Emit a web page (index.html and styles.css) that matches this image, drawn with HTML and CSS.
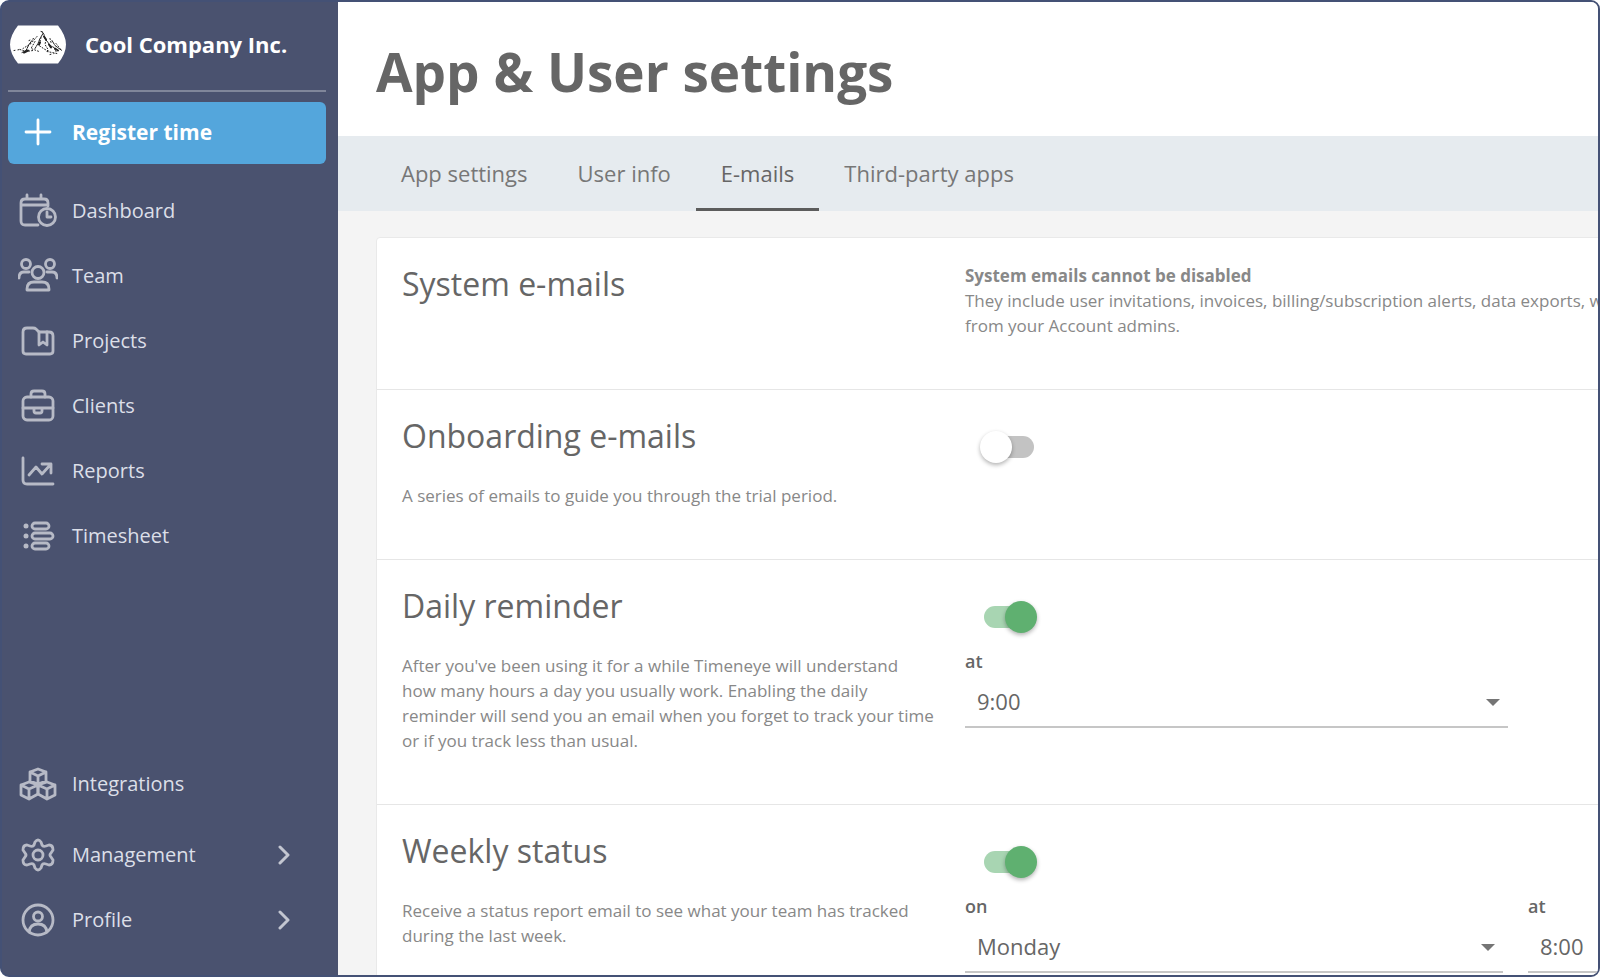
FILE: index.html
```html
<!DOCTYPE html>
<html lang="en">
  <head>
    <meta charset="utf-8" />
    <meta name="viewport" content="width=device-width, initial-scale=1" />
    <title>App &amp; User settings</title>
    <link rel="stylesheet" href="styles.css">
  </head>
  <body>
    <div class="app">
      <aside class="sidebar">
        <div class="company">
          <svg class="company-logo" viewBox="0 0 56 38" aria-hidden="true">
            <path d="M8 0H48Q56 10 56 19T48 38H8Q0 28 0 19T8 0Z" fill="#fff" />
            <g fill="none" stroke="#222" stroke-linecap="round">
              <path stroke-width="1" stroke-dasharray="4 1" d="M32 6l2 3 1 4 3 4 2 3 4 2 2 4M33 8l-3 5-2 5-3 5M42 15l3 5 4 3 3 2M22 15l-3 4-3 6-4 2" />
              <path stroke-width="2" d="M34 11l2 3M39 19l2 3M45 23l3 2M18 25l-4 2M30 17l-1 2" />
              <path stroke-width="1" stroke-dasharray="1 2" d="M27 11l-6 7-8 5M31 12l-2 8 6 4 5 2M25 16l-4 7 8 3M36 14l-1 5 3 5M40 13l1 4M46 18l4 5M10 24l6 2 7-1M37 26l10 2" />
              <path stroke-width="1" stroke-dasharray="1 3" d="M4 25l6-1M19 15l5-2M31 6l3 1M40 29l4-1" />
            </g>
          </svg>
          <span class="company-name">Cool Company Inc.</span>
        </div>

        <button type="button" class="register">
          <svg class="icon" viewBox="0 0 40 40" aria-hidden="true"><path d="M20 8v24M8 20h24" /></svg>
          Register time
        </button>

        <nav class="nav">
          <a href="#" class="nav-link">
            <svg class="icon" viewBox="0 0 40 40" aria-hidden="true">
              <path d="M20 34H7q-4 0-4-4V12q0-4 4-4h19q4 0 4 4v3M3 14h27M9 4v4M23 4v4" />
              <circle cx="29" cy="26" r="8.5" />
              <path d="M29 21v5h4" />
            </svg>
            Dashboard
          </a>
          <a href="#" class="nav-link">
            <svg class="icon" viewBox="0 0 40 40" aria-hidden="true">
              <circle cx="8" cy="8" r="4.5" />
              <circle cx="32" cy="8" r="4.5" />
              <circle cx="20" cy="16.5" r="6" />
              <path d="M1 22q0-6 5-6h5M39 22q0-6-5-6h-5M9 34v-1q0-7 7-7h8q7 0 7 7v1z" />
            </svg>
            Team
          </a>
          <a href="#" class="nav-link">
            <svg class="icon" viewBox="0 0 40 40" aria-hidden="true">
              <path d="M5 30V11q0-4 4-4h6q2 0 3 1l3 3h10q4 0 4 4v15q0 3-3 3H8q-3 0-3-3z" />
              <path d="M21 11v13l4-3 4 3V11" />
            </svg>
            Projects
          </a>
          <a href="#" class="nav-link">
            <svg class="icon" viewBox="0 0 40 40" aria-hidden="true">
              <rect x="5" y="11" width="30" height="23" rx="4" />
              <path d="M13 11V8q0-3 3-3h8q3 0 3 3v3M5 22h30M16 22v3q0 2 2 2h4q2 0 2-2v-3" />
            </svg>
            Clients
          </a>
          <a href="#" class="nav-link">
            <svg class="icon" viewBox="0 0 40 40" aria-hidden="true">
              <path d="M5 7v22q0 4 4 4h26M11 24l7-8 6 7 9-10M24 13h9v9" />
            </svg>
            Reports
          </a>
          <a href="#" class="nav-link">
            <svg class="icon" viewBox="0 0 40 40" aria-hidden="true">
              <rect x="14" y="7" width="17" height="6" rx="3" />
              <rect x="14" y="17" width="21" height="6" rx="3" />
              <rect x="14" y="27" width="17" height="6" rx="3" />
              <g class="dot"><circle cx="8" cy="10" r="2.5" /><circle cx="8" cy="20" r="2.5" /><circle cx="8" cy="30" r="2.5" /></g>
            </svg>
            Timesheet
          </a>
        </nav>

        <nav class="nav nav-bottom">
          <a href="#" class="nav-link integrations">
            <svg class="icon" viewBox="0 0 40 40" aria-hidden="true">
              <path d="M20 5l8 3v9l-8 3-8-3V8zM12 8l8 4 8-4M20 12v8" />
              <path d="M11 18l9 3v9l-9 5-8-4V21zM3 21l8 4 9-4M11 25v9" />
              <path d="M29 18l8 3v10l-8 4-9-5v-9zM20 21l9 4 8-4M29 25v9" />
            </svg>
            Integrations
          </a>
          <a href="#" class="nav-link">
            <svg class="icon" viewBox="0 0 40 40" aria-hidden="true">
              <path d="M17 7q3-4 6 0l1 3q1 2 4 1l3-1q4 0 4 5l-2 3q-2 2 0 4l2 3q0 5-4 5l-3-1q-3-1-4 1l-1 3q-3 4-6 0l-1-3q-1-2-4-1l-3 1q-4 0-4-5l2-3q2-2 0-4l-2-3q0-5 4-5l3 1q3 1 4-1z" />
              <circle cx="20" cy="20" r="5" />
            </svg>
            Management
            <svg class="chevron" viewBox="0 0 12 20" aria-hidden="true"><path d="M2 2l8 8-8 8" /></svg>
          </a>
          <a href="#" class="nav-link">
            <svg class="icon" viewBox="0 0 40 40" aria-hidden="true">
              <circle cx="20" cy="20" r="15" />
              <circle cx="20" cy="16.5" r="4.5" />
              <path d="M11 32q1-8 9-8t9 8" />
            </svg>
            Profile
            <svg class="chevron" viewBox="0 0 12 20" aria-hidden="true"><path d="M2 2l8 8-8 8" /></svg>
          </a>
        </nav>
      </aside>

      <main class="main">
        <header class="page-header">
          <h1>App &amp; User settings</h1>
        </header>

        <nav class="tabs">
          <a href="#" class="tab">App settings</a>
          <a href="#" class="tab">User info</a>
          <a href="#" class="tab active">E-mails</a>
          <a href="#" class="tab">Third-party apps</a>
        </nav>

        <form class="card">
          <section class="row">
            <div class="info">
              <h2>System e-mails</h2>
            </div>
            <p class="note">
              <strong>System emails cannot be disabled</strong><br />
              They include user invitations, invoices, billing/subscription alerts, data exports, w<br />
              from your Account admins.
            </p>
          </section>

          <section class="row">
            <div class="info">
              <h2><label for="onboarding">Onboarding e-mails</label></h2>
              <p>A series of emails to guide you through the trial period.</p>
            </div>
            <div class="controls">
              <input type="checkbox" class="switch" id="onboarding" name="onboarding" />
            </div>
          </section>

          <section class="row">
            <div class="info">
              <h2><label for="daily">Daily reminder</label></h2>
              <p>
                After you've been using it for a while Timeneye will understand<br />
                how many hours a day you usually work. Enabling the daily<br />
                reminder will send you an email when you forget to track your time<br />
                or if you track less than usual.
              </p>
            </div>
            <div class="controls">
              <input type="checkbox" class="switch" id="daily" name="daily" checked />
              <div class="fields single">
                <div class="field">
                  <label for="daily-time">at</label>
                  <div class="select-box">
                    <select id="daily-time" name="daily-time">
                      <option>9:00</option>
                    </select>
                  </div>
                </div>
              </div>
            </div>
          </section>

          <section class="row">
            <div class="info">
              <h2><label for="weekly">Weekly status</label></h2>
              <p>
                Receive a status report email to see what your team has tracked<br />
                during the last week.
              </p>
            </div>
            <div class="controls">
              <input type="checkbox" class="switch" id="weekly" name="weekly" checked />
              <div class="fields">
                <div class="field">
                  <label for="weekly-day">on</label>
                  <div class="select-box">
                    <select id="weekly-day" name="weekly-day">
                      <option>Monday</option>
                    </select>
                  </div>
                </div>
                <div class="field">
                  <label for="weekly-time">at</label>
                  <div class="select-box">
                    <select id="weekly-time" name="weekly-time">
                      <option>8:00</option>
                    </select>
                  </div>
                </div>
              </div>
            </div>
          </section>
        </form>
      </main>
    </div>
  </body>
</html>
```

FILE: styles.css
```css
* {
  box-sizing: border-box;
}
body {
  margin: 0;
  background-color: #fff;
  font-family: "Open Sans", "Noto Sans", sans-serif;
  font-size: 17px;
  line-height: 25px;
  color: #888;
}
h1,
h2,
p {
  margin: 0;
}
a {
  text-decoration: none;
}

.app {
  display: flex;
  height: 100vh;
  border: 2px solid #445175;
  border-radius: 9px;
  overflow: hidden;
  background-color: #4a526f;
}

/* sidebar */
.sidebar {
  display: flex;
  flex-direction: column;
  flex: 0 0 336px;
  padding: 0 12px 23px 6px;
  background-color: #4a526f;
}
.company {
  display: flex;
  align-items: center;
  gap: 19px;
  height: 90px;
  padding: 0 2px 4px;
  border-bottom: 2px solid #80869a;
  color: #fff;
}
.company-logo {
  width: 56px;
  height: 39px;
}
.company-name {
  font-size: 22px;
  font-weight: 700;
}
.register {
  display: flex;
  align-items: center;
  gap: 14px;
  height: 62px;
  margin: 10px 0 14px;
  padding: 0 10px 3px;
  border: none;
  border-radius: 6px;
  background-color: #54a6dc;
  color: #fff;
  font-family: inherit;
  font-size: 21px;
  font-weight: 700;
  cursor: pointer;
}
.nav {
  display: flex;
  flex-direction: column;
}
.nav-bottom {
  margin-top: auto;
}
.nav-link {
  display: flex;
  align-items: center;
  gap: 14px;
  height: 65px;
  padding: 0 36px 0 10px;
  font-size: 20px;
  color: #dcdfe8;
}
.integrations {
  margin-bottom: 6px;
}
.icon {
  width: 40px;
  height: 40px;
  fill: none;
  stroke: #b7bac6;
  stroke-width: 2.8;
  stroke-linecap: round;
  stroke-linejoin: round;
}
.register .icon {
  stroke: #fff;
}
.icon .dot {
  fill: #b7bac6;
  stroke: none;
}
.chevron {
  width: 12px;
  height: 20px;
  margin-left: auto;
  fill: none;
  stroke: #c3c6d1;
  stroke-width: 3;
  stroke-linecap: round;
  stroke-linejoin: round;
}

/* page */
.main {
  flex: 1;
  min-width: 0;
  overflow: hidden;
  background-color: #f4f4f4;
}
.page-header {
  padding: 38px 38px 32px;
  background-color: #fff;
}
h1 {
  font-size: 53px;
  line-height: 64px;
  font-weight: 700;
  color: #666;
}
.tabs {
  display: flex;
  padding: 0 38px;
  background-color: #e6ebef;
}
.tab {
  padding: 22px 25px 19px;
  border-bottom: 3px solid transparent;
  font-size: 22px;
  line-height: 31px;
  color: #777;
}
.tab.active {
  border-color: #5c5c5c;
  color: #666;
}

/* settings */
.card {
  min-width: 1740px;
  margin: 26px 38px;
  border: 1px solid #e9e9e9;
  border-radius: 4px;
  background-color: #fff;
}
.row {
  display: grid;
  grid-template-columns: 538px 1fr;
  column-gap: 25px;
  padding: 25px 25px 51px;
}
.row + .row {
  border-top: 1px solid #e6e6e6;
}
h2 {
  font-size: 32px;
  line-height: 42px;
  font-weight: 400;
  color: #666;
}
.info p {
  margin-top: 26px;
}
.controls {
  padding-top: 21px;
}
.switch {
  appearance: none;
  display: block;
  width: 50px;
  height: 22px;
  margin: 0 19px;
  border-radius: 11px;
  background-color: #c3c3c3;
  cursor: pointer;
}
.switch::before {
  content: "";
  display: block;
  width: 32px;
  height: 32px;
  border-radius: 50%;
  background-color: #fff;
  box-shadow: 0 2px 4px rgba(0, 0, 0, 0.3);
  transform: translate(-4px, -5px);
}
.switch:checked {
  background-color: #a8d5b2;
}
.switch:checked::before {
  background-color: #5fb070;
  transform: translate(21px, -5px);
}
.fields {
  display: grid;
  grid-template-columns: 538px 538px;
  column-gap: 25px;
  margin-top: 21px;
}
.fields.single {
  grid-template-columns: 543px;
}
.field label {
  display: block;
  font-size: 18px;
  font-weight: 600;
  color: #666;
}
.select-box {
  position: relative;
  margin-top: 2px;
}
.select-box::after {
  content: "";
  position: absolute;
  top: 23px;
  right: 8px;
  border: 7px solid transparent;
  border-top-color: #757575;
  border-bottom: none;
  pointer-events: none;
}
select {
  appearance: none;
  width: 100%;
  height: 52px;
  padding: 0 24px 0 12px;
  border: none;
  border-bottom: 2px solid #c6c6c6;
  border-radius: 0;
  background-color: transparent;
  color: #666;
  font-family: inherit;
  font-size: 22px;
}
```
